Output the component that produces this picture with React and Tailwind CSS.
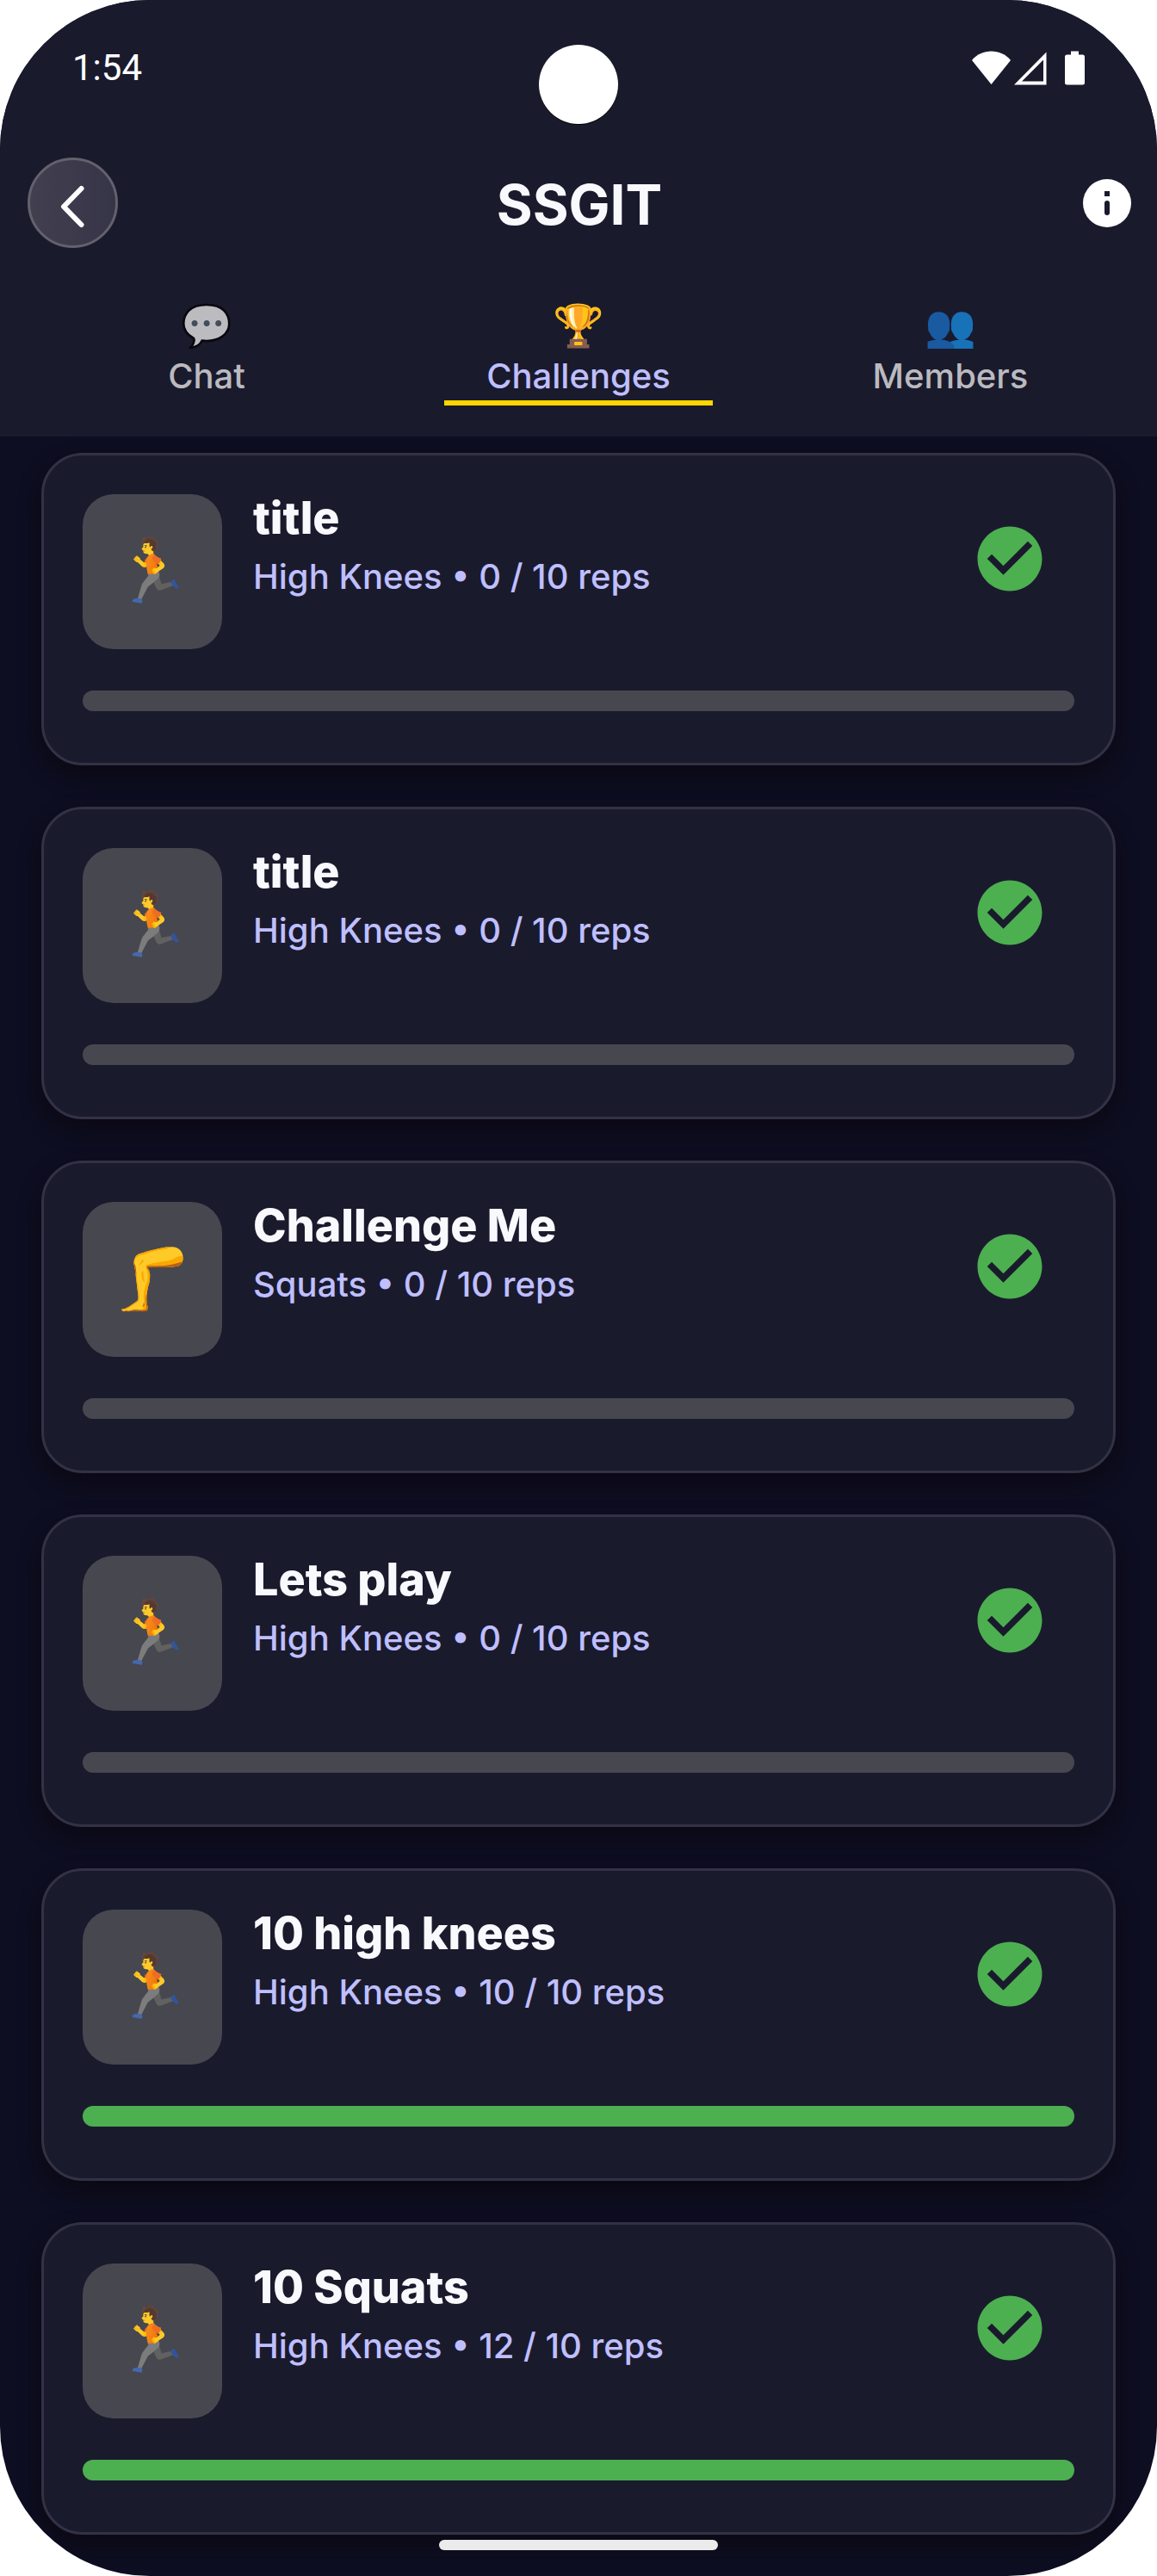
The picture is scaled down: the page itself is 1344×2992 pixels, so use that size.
import React, { useState } from "react";
import { MdCheckCircle } from "react-icons/md";

const tabs = [
  { label: "Chat", emoji: "💬" },
  { label: "Challenges", emoji: "🏆" },
  { label: "Members", emoji: "👥" },
];

const challenges = [
  { title: "title", exercise: "High Knees", done: 0, goal: 10, emoji: "🏃" },
  { title: "title", exercise: "High Knees", done: 0, goal: 10, emoji: "🏃" },
  { title: "Challenge Me", exercise: "Squats", done: 0, goal: 10, emoji: "🦵" },
  { title: "Lets play", exercise: "High Knees", done: 0, goal: 10, emoji: "🏃" },
  { title: "10 high knees", exercise: "High Knees", done: 10, goal: 10, emoji: "🏃" },
  { title: "10 Squats", exercise: "High Knees", done: 12, goal: 10, emoji: "🏃" },
];

function Emoji({ className, children }) {
  return (
    <span aria-hidden="true" className={`font-['Noto_Color_Emoji',sans-serif] ${className}`}>
      {children}
    </span>
  );
}

function StatusBar() {
  return (
    <div className="flex h-[158px] items-center justify-between px-[84px] text-white">
      <span className="font-['Roboto',sans-serif] text-[42px] leading-[48px]">1:54</span>
      <svg className="h-10 w-[132px]" viewBox="0 0 132 40" fill="currentColor" aria-hidden="true">
        <path d="M1 11C12-3 35-3 46 11L23.500 39Z" />
        <path fillRule="evenodd" d="M50 39.500L87.500 1.500V39.500ZM59 35.500H84V10.500Z" />
        <path d="M116 0.500h9v4h5a2.500 2.500 0 0 1 2 2.500V37a2.500 2.500 0 0 1-2.500 2.500h-18A2.500 2.500 0 0 1 109 37V7a2.500 2.500 0 0 1 2.500-2.500H116Z" />
      </svg>
    </div>
  );
}

function NavBar() {
  return (
    <div className="mt-[25px] grid grid-cols-[105px_1fr_105px] items-center pr-[30px] pl-8">
      <button
        type="button"
        aria-label="Back"
        className="flex size-[105px] items-center justify-center rounded-full border-[3px] border-[#62616e] bg-linear-to-r from-[#42404f] to-[#363447]"
      >
        <svg className="size-[99px]" viewBox="0 0 99 99" fill="none" stroke="#fff" strokeWidth="6" strokeLinecap="round" strokeLinejoin="round" aria-hidden="true">
          <path d="M59.500 33L39 54L59.500 75" />
        </svg>
      </button>
      <h1 className="pt-1 text-center text-[64px] leading-[76px] font-bold text-[#f8f9fc]">SSGIT</h1>
      <button type="button" aria-label="Group info" className="justify-self-end">
        <svg className="size-14" viewBox="0 0 56 56" aria-hidden="true">
          <circle cx="28" cy="28" r="28" fill="#fff" />
          <rect x="25" y="14" width="6" height="6" fill="#1a1a2d" />
          <rect x="25" y="25" width="6" height="17" rx="3" fill="#1a1a2d" />
        </svg>
      </button>
    </div>
  );
}

function Tabs({ active, onSelect }) {
  return (
    <div role="tablist" className="mt-[63px] grid grid-cols-3 px-6">
      {tabs.map(({ label, emoji }) => {
        const selected = label === active;
        return (
          <button
            key={label}
            type="button"
            role="tab"
            aria-selected={selected}
            onClick={() => onSelect(label)}
            className="flex flex-col items-center px-[60px]"
          >
            <Emoji className={`h-14 text-5xl leading-14 ${selected ? "" : "opacity-70"}`}>{emoji}</Emoji>
            <span className={`mt-1.5 text-[40px] leading-12 font-medium ${selected ? "text-[#bfbfff]" : "text-[#bababf]"}`}>
              {label}
            </span>
            <span className={`mt-1 h-1.5 w-full ${selected ? "bg-[#ffd700]" : ""}`} />
          </button>
        );
      })}
    </div>
  );
}

function ChallengeCard({ title, exercise, done, goal, emoji }) {
  const percent = Math.min(100, (done / goal) * 100);
  return (
    <li className="rounded-[48px] border-[3px] border-[#323145] bg-[#1a1a2d] px-[45px] pt-[45px] pb-[60px] shadow-[0_12px_24px_rgba(12,8,18,0.8)]">
      <div className="flex items-start">
        <div className="flex h-[180px] w-[162px] items-center justify-center rounded-[36px] bg-[#47474f]">
          <Emoji className="text-7xl leading-[84px]">{emoji}</Emoji>
        </div>
        <div className="ml-9 flex-1">
          <h2 className="text-[52px] leading-14 font-extrabold text-[#f8f9fc]">{title}</h2>
          <p className="mt-4 text-[40px] leading-12 font-medium text-[#bfbfff]">
            {exercise} • {done} / {goal} reps
          </p>
        </div>
        <button type="button" aria-label={`Complete ${title}`} className="p-[30px] text-[#4caf50]">
          <MdCheckCircle className="size-[90px]" />
        </button>
      </div>
      <div
        role="progressbar"
        aria-label={`${title} progress`}
        aria-valuenow={percent}
        aria-valuemin={0}
        aria-valuemax={100}
        className="mt-12 h-6 overflow-hidden rounded-full bg-[#47474f]"
      >
        <div className="h-full bg-[#4caf50]" style={{ width: `${percent}%` }} />
      </div>
    </li>
  );
}

export default function App() {
  const [active, setActive] = useState("Challenges");
  return (
    <div className="bg-white">
      <div className="relative overflow-hidden rounded-[174px] bg-[#0d0e21] font-['Inter',sans-serif]">
        <div className="absolute top-[52px] left-1/2 size-[92px] -translate-x-1/2 rounded-full bg-white shadow-[0_1px_0_#000]" />
        <header className="bg-[#1a1a2d] pb-9">
          <StatusBar />
          <NavBar />
          <Tabs active={active} onSelect={setActive} />
        </header>
        <main>
          <ul className="flex flex-col gap-12 px-12 pt-[19px] pb-12">
            {challenges.map((challenge, index) => (
              <ChallengeCard key={index} {...challenge} />
            ))}
          </ul>
        </main>
        <div className="absolute bottom-[30px] left-1/2 h-3 w-[324px] -translate-x-1/2 rounded-full bg-[#ebebeb]" />
      </div>
    </div>
  );
}
